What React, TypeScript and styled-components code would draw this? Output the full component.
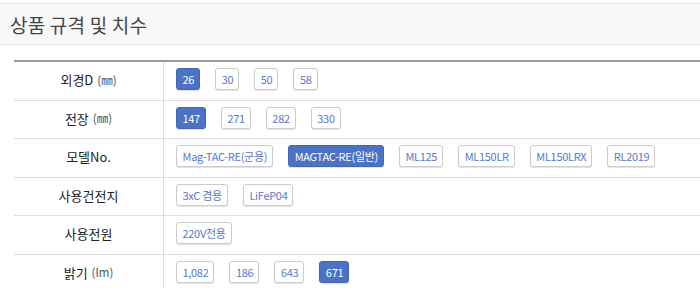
import { FC } from "react";
import styled, { createGlobalStyle } from "styled-components";

const GlobalStyle = createGlobalStyle`
  html, body {
    margin: 0;
    padding: 0;
    background: #fff;
    font-family: "Noto Sans CJK KR", sans-serif;
    color: #333;
  }
`;

const Page = styled.div`
  width: 700px;
  height: 288px;
  overflow: hidden;
  padding-top: 3px;
  box-sizing: border-box;
`;

const TitleBar = styled.div`
  height: 40px;
  display: flex;
  align-items: center;
  padding-left: 10px;
  background: #f8f8f8;
  border-top: 1px solid #e6e6e6;
  border-bottom: 1px solid #e6e6e6;
`;

const Title = styled.h3`
  margin: 0;
  font-family: "Noto Sans CJK KR", sans-serif;
  font-weight: 400;
  font-size: 19px;
  color: #444;
  letter-spacing: 0.2px;
`;

const Table = styled.div`
  margin: 15px 0 0 14px;
  border-top: 2px solid #999;
`;

const Row = styled.div`
  display: grid;
  grid-template-columns: 150px 1fr;
  border-bottom: 1px solid #ddd;
`;

const Label = styled.div`
  display: flex;
  align-items: center;
  justify-content: center;
  border-right: 1px solid #ddd;
  font-family: "Noto Sans CJK KR", sans-serif;
  font-size: 13px;
  color: #222;
  padding-bottom: 2px;
`;

const Unit = styled.span`
  font-size: 11.5px;
  color: #555;
  margin-left: 4px;
`;

const Options = styled.div`
  display: flex;
  flex-wrap: wrap;
  gap: 15px;
  padding: 6px 12px 9.5px;
`;

const Chip = styled.span<{ $active?: boolean }>`
  display: inline-flex;
  align-items: center;
  height: 22px;
  box-sizing: border-box;
  padding: 0 5px 0 5.5px;
  border-radius: 3px;
  border: 1px solid ${(p) => (p.$active ? "#4267b6" : "#ccc")};
  background: ${(p) => (p.$active ? "#4b72c5" : "#fff")};
  color: ${(p) => (p.$active ? "#fff" : "#5b78c9")};
  box-shadow: 0 1px 1px rgba(0, 0, 0, 0.12);
  font-family: "Noto Sans CJK KR", sans-serif;
  font-size: 11px;
  letter-spacing: -0.3px;
  white-space: nowrap;
`;

type Spec = {
  label: string;
  unit?: string;
  items: string[];
  active?: number;
};

const specs: Spec[] = [
  { label: "외경D", unit: "(㎜)", items: ["26", "30", "50", "58"], active: 0 },
  { label: "전장", unit: "(㎜)", items: ["147", "271", "282", "330"], active: 0 },
  {
    label: "모델No.",
    items: ["Mag-TAC-RE(군용)", "MAGTAC-RE(일반)", "ML125", "ML150LR", "ML150LRX", "RL2019"],
    active: 1,
  },
  { label: "사용건전지", items: ["3xC 겸용", "LiFeP04"] },
  { label: "사용전원", items: ["220V전용"] },
  { label: "밝기", unit: "(lm)", items: ["1,082", "186", "643", "671"], active: 3 },
];

const App: FC = () => (
  <>
    <GlobalStyle />
    <Page>
      <TitleBar>
        <Title>상품 규격 및 치수</Title>
      </TitleBar>
      <Table>
        {specs.map((s) => (
          <Row key={s.label}>
            <Label>
              {s.label}
              {s.unit && <Unit>{s.unit}</Unit>}
            </Label>
            <Options>
              {s.items.map((it, i) => (
                <Chip key={it} $active={i === s.active}>
                  {it}
                </Chip>
              ))}
            </Options>
          </Row>
        ))}
      </Table>
    </Page>
  </>
);

export default App;
